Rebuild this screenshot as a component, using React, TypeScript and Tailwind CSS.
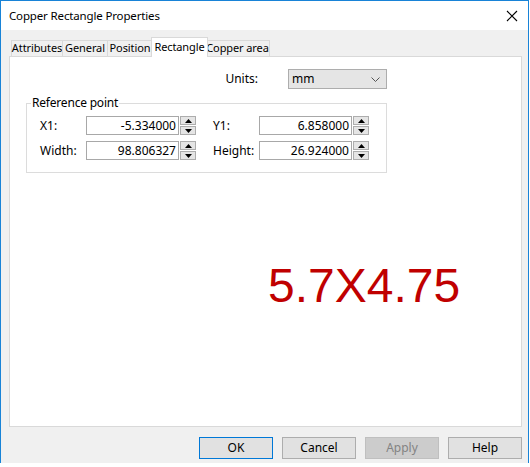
import React from "react";

const font = { fontFamily: '"Noto Sans", "Open Sans", sans-serif' };

function Spin({ value }: { value: string }) {
  return (
    <div className="flex h-[19px] w-[110px]">
      <div className="flex h-full w-[93px] items-center justify-end border border-[#a8a8a8] bg-white pr-[2px] text-[12px] text-black">
        {value}
      </div>
      <div className="ml-[1px] flex h-full w-[16px] flex-col gap-[1px]">
        <div className="flex flex-1 items-center justify-center border border-[#adadad] bg-[#e5e5e5]">
          <svg width="7" height="4" viewBox="0 0 7 4"><path d="M3.5 0 L7 4 L0 4 Z" fill="#000" /></svg>
        </div>
        <div className="flex flex-1 items-center justify-center border border-[#adadad] bg-[#e5e5e5]">
          <svg width="7" height="4" viewBox="0 0 7 4"><path d="M0 0 L7 0 L3.5 4 Z" fill="#000" /></svg>
        </div>
      </div>
    </div>
  );
}

function Tab({ label, w, selected }: { label: string; w: number; selected?: boolean }) {
  if (selected) {
    return (
      <div
        className="relative z-10 -mx-[2px] -mb-px flex h-[20px] items-start justify-center whitespace-nowrap border border-b-0 border-[#d9d9d9] bg-white pt-[1px] text-[11px] tracking-[-0.1px] text-black"
        style={{ width: w }}
      >
        {label}
      </div>
    );
  }
  return (
    <div
      className="-ml-px flex h-[16px] items-center justify-center whitespace-nowrap border border-b-0 border-[#d9d9d9] bg-[#f0f0f0] text-[11px] tracking-[-0.1px] text-black first:ml-0"
      style={{ width: w }}
    >
      {label}
    </div>
  );
}

function Btn({ label, kind }: { label: string; kind?: "default" | "disabled" }) {
  const cls =
    kind === "default"
      ? "border-[#0078d7] bg-[#e1e1e1] text-black"
      : kind === "disabled"
      ? "border-[#bfbfbf] bg-[#cccccc] text-[#838383]"
      : "border-[#adadad] bg-[#e1e1e1] text-black";
  return (
    <div className={`flex h-[22px] w-[74px] items-center justify-center border text-[12px] ${cls}`}>{label}</div>
  );
}

export default function App() {
  return (
    <div className="h-[467px] w-[530px] overflow-hidden bg-white" style={font}>
      <div className="flex h-[463px] w-[529px] flex-col border-l border-r border-t border-[#1883d7] bg-[#f0f0f0]">
        {/* title bar */}
        <div className="flex h-[29px] items-center justify-between bg-white pl-[8px] pr-[8px]">
          <span className="text-[11.5px] tracking-[-0.15px] text-black">Copper Rectangle Properties</span>
          <svg width="12" height="12" viewBox="0 0 12 12" className="mr-[2px]">
            <path d="M1 1 L11 11 M11 1 L1 11" stroke="#000" strokeWidth="1.1" />
          </svg>
        </div>
        {/* body */}
        <div className="flex flex-1 flex-col px-[8px] pt-[7px]">
          <div className="flex h-[19px] items-end pl-[2px]">
            <Tab label="Attributes" w={52} />
            <Tab label="General" w={46} />
            <Tab label="Position" w={46} />
            <Tab label="Rectangle" w={57} selected />
            <Tab label="Copper area" w={65} />
          </div>
          <div className="h-[371px] w-[513px] border border-[#d9d9d9] bg-white pl-[16px] pt-[12px]">
            <div className="w-[361px]">
              <div className="flex h-[20px] items-center justify-end">
                <span className="mr-[30px] text-[12px] text-black">Units:</span>
                <div className="flex h-[20px] w-[99px] items-center justify-between border border-[#adadad] bg-[#e5e5e5] pl-[3px] pr-[6px] text-[12px] text-black">
                  <span>mm</span>
                  <svg width="9" height="5" viewBox="0 0 9 5">
                    <path d="M0.5 0.5 L4.5 4.5 L8.5 0.5" stroke="#555" fill="none" strokeWidth="1" />
                  </svg>
                </div>
              </div>
              <fieldset className="mt-[5px] h-[79px] border border-[#dcdcdc] pt-[4px]">
                <legend className="ml-[4px] px-[1px] text-[12px] tracking-[-0.2px] text-black">Reference point</legend>
                <div className="ml-[13px] grid grid-cols-[46px_110px_46px_110px] gap-x-[0px] gap-y-[6px]">
                  <span className="flex items-center text-[12px] text-black">X1:</span>
                  <Spin value="-5.334000" />
                  <span className="ml-[17px] flex items-center text-[12px] text-black">Y1:</span>
                  <div className="ml-[17px]"><Spin value="6.858000" /></div>
                  <span className="flex items-center text-[12px] text-black">Width:</span>
                  <Spin value="98.806327" />
                  <span className="ml-[17px] flex items-center text-[12px] text-black">Height:</span>
                  <div className="ml-[17px]"><Spin value="26.924000" /></div>
                </div>
              </fieldset>
            </div>
            <div
              className="ml-[242px] mt-[89px] text-[48px] leading-none text-[#c00000]"
              style={{ fontFamily: '"Liberation Sans", Arial, sans-serif' }}
            >
              5.7X4.75
            </div>
          </div>
          <div className="-mr-[2px] mt-[10px] flex justify-end gap-[9px]">
            <Btn label="OK" kind="default" />
            <Btn label="Cancel" />
            <Btn label="Apply" kind="disabled" />
            <Btn label="Help" />
          </div>
        </div>
      </div>
    </div>
  );
}
